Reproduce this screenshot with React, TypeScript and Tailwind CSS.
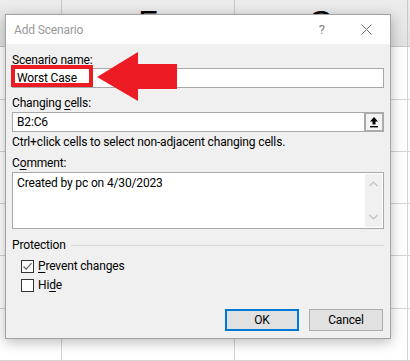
const font = { fontFamily: '"Segoe UI", Roboto, "Liberation Sans", sans-serif' };

function Sheet() {
	const rows = [0, 1, 2, 3, 4, 5];
	return (
		<div className="flex flex-col w-[410px] h-[361px] bg-white">
			<div className="flex h-[49px] bg-gradient-to-b from-[#ececec] to-[#e2e2e2] border-b border-[#c6c6c6]">
				<div className="w-[62px] border-r border-[#c8c8c8]" />
				<div className="w-[173px] border-r border-[#c8c8c8] flex justify-center">
					<span className="mt-[6px] text-[32px] leading-[32px] text-black" style={{ fontFamily: '"Liberation Sans", sans-serif' }}>F</span>
				</div>
				<div className="w-[173px] border-r border-[#c8c8c8] flex justify-center">
					<span className="mt-[6px] text-[32px] leading-[32px] text-black" style={{ fontFamily: '"Liberation Sans", sans-serif' }}>G</span>
				</div>
				<div className="flex-1" />
			</div>
			{rows.map((r) => (
				<div key={r} className="flex h-[54px] border-b border-[#d4d4d4]">
					<div className="w-[62px] border-r border-[#d4d4d4]" />
					<div className="w-[173px] border-r border-[#d4d4d4]" />
					<div className="w-[173px] border-r border-[#d4d4d4]" />
					<div className="flex-1" />
				</div>
			))}
		</div>
	);
}

function Check({ checked, label }: { checked?: boolean; label: [string, string, string] }) {
	return (
		<div className="flex items-center h-4 pl-[9px]">
			<div className="w-[13px] h-[13px] border border-[#333] bg-white flex items-center justify-center">
				{checked && (
					<svg width="11" height="11" viewBox="0 0 11 11">
						<path d="M1.5 5.5 L4.2 8.2 L9.5 2.2" fill="none" stroke="#606060" strokeWidth="1.2" />
					</svg>
				)}
			</div>
			<span className="ml-[4px]">
				{label[0]}
				<span className="underline underline-offset-2">{label[1]}</span>
				{label[2]}
			</span>
		</div>
	);
}

function Dialog() {
	return (
		<div
			className="absolute left-[5px] top-[14px] w-[386px] h-[325px] border border-[#a3a3a3] bg-[#f0f0f0] shadow-[0_3px_12px_rgba(0,0,0,0.28)] flex flex-col"
			style={font}
		>
			<div className="h-[29px] bg-white flex items-center pl-[8px] pr-[18px]">
				<span className="text-[12px] tracking-[-0.15px] text-[#9a9a9a]">Add Scenario</span>
				<div className="flex-1" />
				<span className="text-[13px] text-[#808080] mr-[36px]">?</span>
				<svg width="11" height="11" viewBox="0 0 11 11">
					<path d="M0.5 0.5 L10.5 10.5 M10.5 0.5 L0.5 10.5" stroke="#707070" strokeWidth="1" />
				</svg>
			</div>
			<div className="flex flex-col pl-[6px] pr-[6px] pt-[8px] text-[12px] tracking-[-0.15px] leading-4 text-black">
				<div>Scenario name:</div>
				<div className="relative h-[20px] border border-[#a8a8a8] bg-white flex items-center">
					<div className="absolute left-[-2px] top-[-4px] w-[82px] h-[22px] border-[4px] border-[#ed1c24]" />
					<span className="pl-[4px]">Worst Case</span>
				</div>
				<div className="mt-[7px]">
					Changing <span className="underline underline-offset-2">c</span>ells:
				</div>
				<div className="mt-[1px] h-[20px] border border-[#a8a8a8] bg-white flex items-center">
					<span className="pl-[4px] flex-1">B2:C6</span>
					<div className="w-[20px] h-[20px] mr-[-1px] border-[2px] border-[#ababab] bg-[#f4f4f4] flex items-center justify-center">
						<svg width="10" height="12" viewBox="0 0 10 12">
							<path d="M5 1 L9 5.5 L6.5 5.5 L6.5 8.5 L3.5 8.5 L3.5 5.5 L1 5.5 Z" fill="#000" />
							<rect x="1" y="10" width="8" height="1.4" fill="#000" />
						</svg>
					</div>
				</div>
				<div className="mt-[2px]">Ctrl+click cells to select non-adjacent changing cells.</div>
				<div className="mt-[5px]">
					C<span className="underline underline-offset-2">o</span>mment:
				</div>
				<div className="mt-[1px] h-[57px] border border-[#a8a8a8] bg-white flex">
					<span className="pl-[4px] pt-[2px] flex-1">Created by pc on 4/30/2023</span>
					<div className="w-[17px] my-[1px] mr-[1px] bg-[#f0f0f0] flex flex-col items-center justify-between py-[7px]">
						<svg width="9" height="6" viewBox="0 0 9 6">
							<path d="M0.5 5 L4.5 1 L8.5 5" fill="none" stroke="#c2c2c2" strokeWidth="1.2" />
						</svg>
						<svg width="9" height="6" viewBox="0 0 9 6">
							<path d="M0.5 1 L4.5 5 L8.5 1" fill="none" stroke="#c2c2c2" strokeWidth="1.2" />
						</svg>
					</div>
				</div>
				<div className="mt-[8px] flex items-center">
					<span>Protection</span>
					<div className="flex-1 ml-[5px] h-px bg-[#dadada]" />
				</div>
				<div className="mt-[5px]">
					<Check checked label={["", "P", "revent changes"]} />
				</div>
				<div className="mt-[3px]">
					<Check label={["Hi", "d", "e"]} />
				</div>
				<div className="mt-[16px] flex justify-end gap-[10px] pr-[1px]">
					<button className="w-[74px] h-[22px] border-2 border-[#0078d7] bg-[#e1e1e1] text-[12px] text-black">OK</button>
					<button className="w-[74px] h-[22px] border border-[#adadad] bg-[#e1e1e1] text-[12px] text-black">Cancel</button>
				</div>
			</div>
		</div>
	);
}

export default function App() {
	return (
		<div className="relative w-[410px] h-[361px] overflow-hidden">
			<Sheet />
			<Dialog />
			<svg className="absolute left-[95px] top-[50px]" width="84" height="53" viewBox="0 0 84 53">
				<path d="M2 27 L43 2 L43 14 L82 14 L82 39 L43 39 L43 51 Z" fill="#ed1c24" />
			</svg>
		</div>
	);
}
